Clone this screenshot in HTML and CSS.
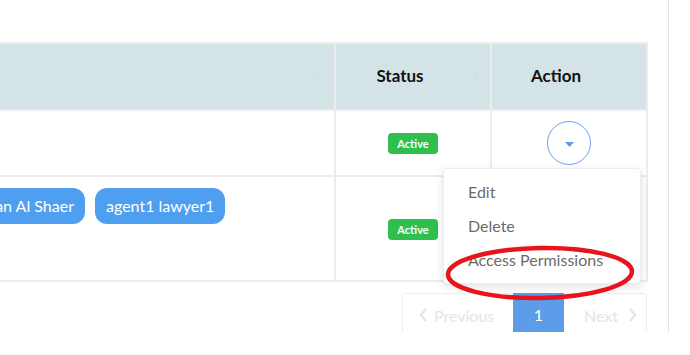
FILE: index.html
```html
<!DOCTYPE html>
<html lang="en">
<head>
    <meta charset="UTF-8">
    <meta name="viewport" content="width=device-width, initial-scale=1.0">
    <title>Users</title>
    <link rel="stylesheet" href="styles.css">
</head>
<body>

    <div class="main">

        <!-- Users table -->
        <div class="table-wrap">
            <table class="grid">
                <colgroup>
                    <col class="col-lawyers">
                    <col class="col-status">
                    <col class="col-action">
                </colgroup>
                <thead>
                    <tr>
                        <th class="th-left"><span class="sort">&#9650;<br>&#9660;</span></th>
                        <th>Status <span class="sort">&#9650;<br>&#9660;</span></th>
                        <th>Action</th>
                    </tr>
                </thead>
                <tbody>
                    <tr class="row-short">
                        <td></td>
                        <td class="center"><span class="badge">Active</span></td>
                        <td class="center">
                            <div class="dd">
                                <button class="dd-toggle">
                                    <svg width="9" height="5" viewBox="0 0 9 5"><path d="M0 0H9L4.5 5Z" fill="#5b9bec"/></svg>
                                </button>
                                <ul class="dd-menu">
                                    <li>Edit</li>
                                    <li>Delete</li>
                                    <li>Access Permissions</li>
                                </ul>
                            </div>
                        </td>
                    </tr>
                    <tr class="row-tall">
                        <td class="chips-cell">
                            <div class="chips">
                                <span class="chip">Mohammed Hassan Al Shaer</span>
                                <span class="chip">agent1 lawyer1</span>
                            </div>
                        </td>
                        <td class="center"><span class="badge">Active</span></td>
                        <td class="center"></td>
                    </tr>
                </tbody>
            </table>
        </div>

        <!-- Pagination -->
        <div class="pager-row">
            <div class="pager">
                <span class="page-btn prev">
                    <svg width="9" height="14" viewBox="0 0 9 14"><path d="M7 1L2 7l5 6" fill="none" stroke="#dfe6e8" stroke-width="2"/></svg>
                    Previous
                </span>
                <span class="page-btn current">1</span>
                <span class="page-btn next">
                    Next
                    <svg width="9" height="14" viewBox="0 0 9 14"><path d="M2 1l5 6-5 6" fill="none" stroke="#dfe6e8" stroke-width="2"/></svg>
                </span>
            </div>
        </div>

        <!-- red annotation -->
        <svg class="mark" width="204" height="66" viewBox="0 0 204 66">
            <ellipse cx="101" cy="32" rx="92" ry="25" fill="none" stroke="#e8141c" stroke-width="4.5" transform="rotate(-1 101 32)"/>
        </svg>
    </div>

</body>
</html>
```

FILE: styles.css
```css
* {
    margin: 0;
    padding: 0;
    box-sizing: border-box;
    font-family: Lato, "Open Sans", sans-serif;
}

body {
    background: #fff;
    width: 690px;
    height: 355px;
    overflow: hidden;
}

.main {
    position: relative;
    width: 669px;
    height: 332px;
    padding-top: 42px;
    border-right: 1px solid #dde4ea;
    overflow: hidden;
}

.table-wrap {
    margin-left: -143px;
}

.grid {
    border-collapse: collapse;
    table-layout: fixed;
    width: 791px;
}

.col-lawyers { width: 477px; }
.col-status { width: 156px; }
.col-action { width: 156px; }

.grid th,
.grid td {
    border: 2px solid #ececec;
}

.grid th {
    position: relative;
    height: 67px;
    background: #d4e3e6;
    color: #111;
    font-size: 17px;
    font-weight: 700;
    text-align: center;
    padding-right: 26px;
    padding-bottom: 2px;
}

.grid th.th-left {
    text-align: left;
    padding-left: 15px;
}

.sort {
    position: absolute;
    right: 12px;
    top: 27px;
    font-size: 5px;
    line-height: 6px;
    color: #cedee1;
}

.row-short td { height: 66px; }
.row-tall td { height: 105px; }

.center {
    text-align: center;
    vertical-align: middle;
}

.badge {
    display: inline-block;
    background: #2ebf4f;
    color: #fff;
    font-size: 11px;
    font-weight: 700;
    line-height: 13px;
    padding: 4px 9px;
    border-radius: 4px;
}

.chips-cell {
    vertical-align: top;
    padding: 11px 15px 0 3px;
}

.chips {
    display: flex;
    flex-wrap: wrap;
    gap: 10px;
}

.chip {
    background: #4f9ff0;
    color: #fff;
    font-size: 16px;
    line-height: 36px;
    height: 36px;
    padding: 0 11px;
    border-radius: 12px;
    white-space: nowrap;
}

/* action dropdown */
.dd {
    position: relative;
    display: inline-block;
}

.dd-toggle {
    display: flex;
    align-items: center;
    justify-content: center;
    width: 44px;
    height: 44px;
    border-radius: 50%;
    border: 1px solid #6aa5ef;
    background: #fff;
    padding-top: 2px;
}

.dd-menu {
    position: absolute;
    top: 47px;
    right: -50px;
    width: 198px;
    list-style: none;
    text-align: left;
    background: #fff;
    border: 1px solid #ececec;
    border-radius: 4px;
    box-shadow: 0 3px 10px rgba(0, 0, 0, 0.12);
    padding: 6px 0;
    z-index: 10;
}

.dd-menu li {
    font-size: 16px;
    line-height: 20px;
    padding: 7px 24px;
    color: #6b6b6b;
    white-space: nowrap;
}

/* pagination */
.pager-row {
    display: flex;
    justify-content: flex-end;
    padding-right: 21px;
    margin-top: 11px;
}

.pager {
    display: flex;
    border: 1px solid #eceeef;
    border-radius: 4px;
    height: 44px;
}

.page-btn {
    display: flex;
    align-items: center;
    gap: 6px;
    font-size: 16px;
    color: #dfe6e8;
}

.page-btn.prev {
    width: 110px;
    padding-left: 16px;
}

.page-btn.current {
    width: 51px;
    justify-content: center;
    background: #5c9ce9;
    color: #fff;
    margin-top: -1px;
}

.page-btn.next {
    width: 82px;
    padding-left: 20px;
    gap: 10px;
}

.mark {
    position: absolute;
    left: 439px;
    top: 241px;
    z-index: 20;
}
```
